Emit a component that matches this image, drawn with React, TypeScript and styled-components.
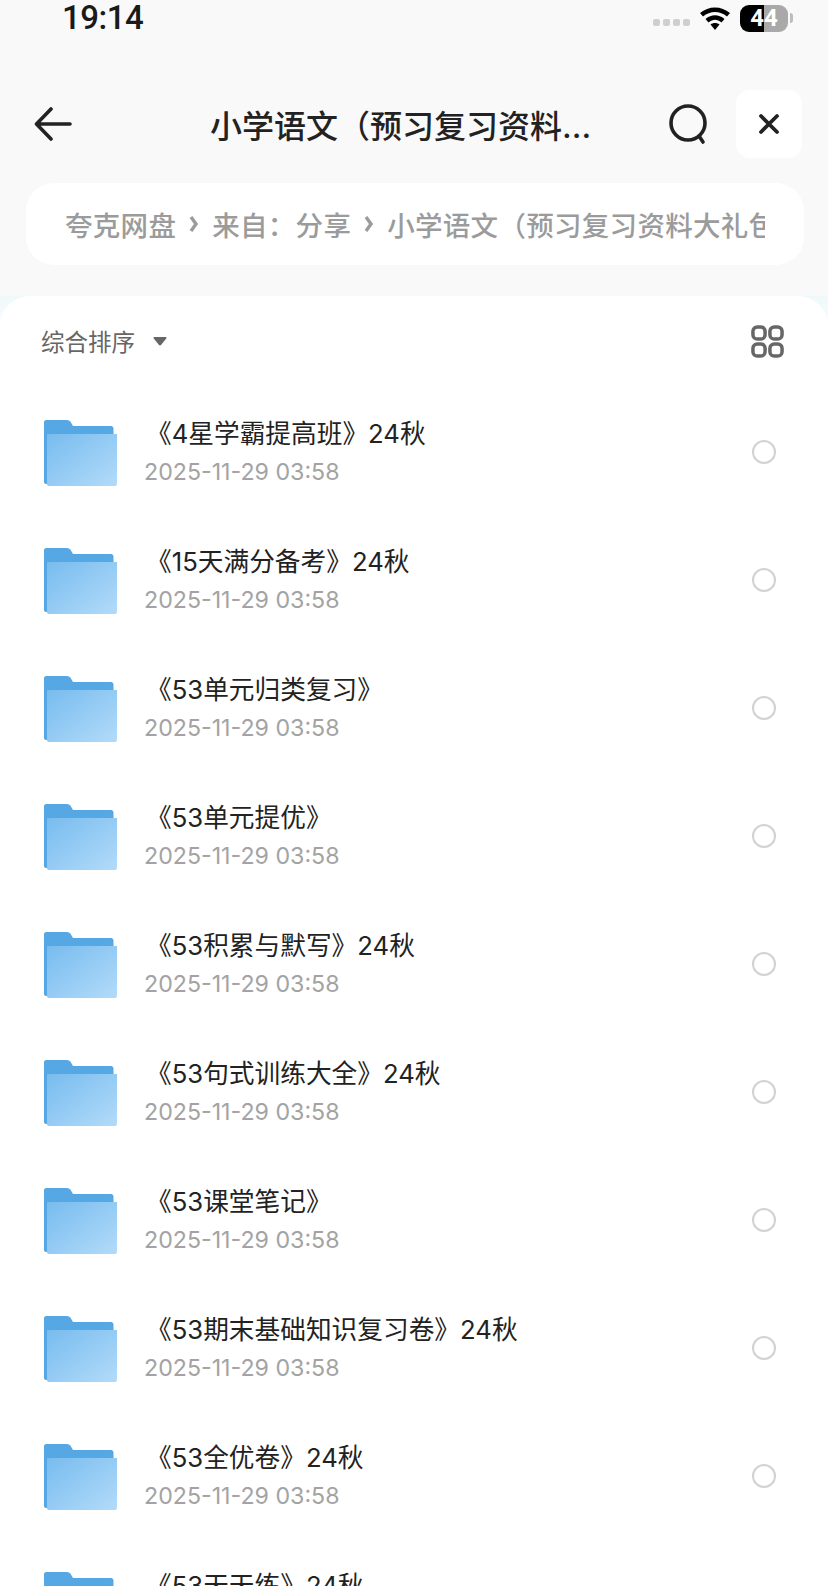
import React, { FC } from "react";
import styled, { createGlobalStyle } from "styled-components";

const GlobalStyle = createGlobalStyle`
  html, body {
    margin: 0;
    padding: 0;
    background: #f9f9f9;
  }
  body {
    width: 828px;
    height: 1586px;
    overflow: hidden;
    font-family: Inter, "Noto Sans CJK SC", sans-serif;
  }
`;

const Page = styled.div`
  width: 828px;
  height: 1586px;
  overflow: hidden;
  display: flex;
  flex-direction: column;
  background: #f9f9f9;
`;

const StatusBar = styled.div`
  height: 36px;
  flex: none;
  display: flex;
  align-items: center;
  padding: 0 35px 0 62px;
`;

const Clock = styled.div`
  font-family: Roboto, sans-serif;
  font-size: 33px;
  line-height: 34px;
  font-weight: 500;
  color: #1a1a1a;
  letter-spacing: -0.5px;
`;

const StatusRight = styled.div`
  margin-left: auto;
  display: flex;
  align-items: center;
`;

const SignalDots = styled.div`
  display: flex;
  gap: 3px;
  margin: 8px 9px 0 0;
`;

const SignalDot = styled.span`
  width: 7px;
  height: 7px;
  border-radius: 2px;
  background: #cfcfcf;
`;

const Battery = styled.div`
  width: 48px;
  height: 27px;
  margin-left: 9px;
  border-radius: 9px;
  background: linear-gradient(90deg, #000 0 50%, #a9a9a9 50% 100%);
  color: #fff;
  font-family: Roboto, sans-serif;
  font-size: 24px;
  font-weight: 700;
  line-height: 27px;
  text-align: center;
`;

const BatteryCap = styled.span`
  width: 3px;
  height: 10px;
  margin-left: 2px;
  border-radius: 0 3px 3px 0;
  background: #bdbdbd;
`;

const NavBar = styled.div`
  flex: none;
  display: flex;
  align-items: center;
  height: 68px;
  margin-top: 54px;
  padding: 0 24px 0 34px;
`;

const NavTitle = styled.div`
  width: 396px;
  margin-left: 138px;
  font-size: 32px;
  font-weight: 500;
  color: #222;
  white-space: nowrap;
`;

const SearchButton = styled.div`
  width: 42px;
  height: 42px;
  margin-left: 62px;
`;

const CloseButton = styled.div`
  width: 66px;
  height: 68px;
  margin-left: 26px;
  border-radius: 14px;
  background: #fff;
  display: flex;
  align-items: center;
  justify-content: center;
`;

const Breadcrumb = styled.div`
  flex: none;
  height: 82px;
  margin: 25px 24px 0 26px;
  padding: 0 39px;
  border-radius: 28px;
  background: #fff;
  display: flex;
  align-items: center;
`;

const CrumbTrack = styled.div`
  flex: 1;
  overflow: hidden;
  display: flex;
  align-items: center;
  white-space: nowrap;
  font-size: 27.5px;
  font-weight: 500;
  letter-spacing: 0.3px;
  color: #9b9b9b;
`;

const CrumbArrow = styled.svg`
  flex: none;
  width: 10px;
  height: 20px;
  margin: 0 13px;
`;

const PanelBack = styled.div`
  flex: 1;
  margin-top: 31px;
  background: linear-gradient(180deg, #eff8fa 0, #fdfefe 40px);
`;

const Panel = styled.div`
  height: 100%;
  border-radius: 30px 30px 0 0;
  background: #fff;
`;

const SortBar = styled.div`
  height: 92px;
  padding: 0 44px 2px 41px;
  display: flex;
  align-items: center;
  box-sizing: border-box;
`;

const SortLabel = styled.span`
  font-size: 23.5px;
  color: #666;
`;

const SortCaret = styled.svg`
  width: 14px;
  height: 10px;
  margin-left: 18px;
`;

const GridIcon = styled.svg`
  width: 33px;
  height: 33px;
  margin-left: auto;
`;

const FileList = styled.div`
  display: flex;
  flex-direction: column;
`;

const Row = styled.div`
  height: 128px;
  flex: none;
  display: flex;
  align-items: center;
  padding: 0 52px 0 44px;
  box-sizing: border-box;
`;

const FolderIcon = styled.svg`
  width: 73px;
  height: 66px;
  flex: none;
  margin-top: 1px;
`;

const RowText = styled.div`
  flex: 1;
  min-width: 0;
  margin-left: 27px;
  padding-top: 2px;
  display: flex;
  flex-direction: column;
`;

const RowTitle = styled.div`
  padding-left: 2px;
  font-size: 25.7px;
  line-height: 38px;
  color: #222;
  white-space: nowrap;
`;

const RowDate = styled.div`
  font-size: 23.2px;
  line-height: 38px;
  color: #a3a3a3;
  white-space: nowrap;
`;

const Radio = styled.span`
  width: 24px;
  height: 24px;
  flex: none;
  box-sizing: border-box;
  border: 2px solid #d2d2d2;
  border-radius: 50%;
`;

const FolderGlyph: FC<{ id: string }> = ({ id }) => (
  <FolderIcon viewBox="0 0 73 66">
    <defs>
      <linearGradient id={id} x1="0" y1="0" x2="1" y2="1">
        <stop offset="0" stopColor="#77bcef" />
        <stop offset="1" stopColor="#b3dbf9" />
      </linearGradient>
    </defs>
    <path
      d="M2 0h21c2 0 3 1 4 2.500L29 6h38c1.500 0 2.500 1 2.500 2.500V64H2c-1 0-2-1-2-2V2C0 1 1 0 2 0z"
      fill="#56a8e4"
    />
    <path
      d="M4 14h69v50c0 1-1 2-2 2H4.500C3.500 66 3 65 3 64V15c0-.6.400-1 1-1z"
      fill={`url(#${id})`}
    />
  </FolderIcon>
);

const Arrow: FC = () => (
  <CrumbArrow viewBox="0 0 10 20">
    <path d="M2 3l5 7-5 7" fill="none" stroke="#9b9b9b" strokeWidth="3.400" />
  </CrumbArrow>
);

const items = [
  "《4星学霸提高班》24秋",
  "《15天满分备考》24秋",
  "《53单元归类复习》",
  "《53单元提优》",
  "《53积累与默写》24秋",
  "《53句式训练大全》24秋",
  "《53课堂笔记》",
  "《53期末基础知识复习卷》24秋",
  "《53全优卷》24秋",
  "《53天天练》24秋",
];

const App: FC = () => (
  <Page>
    <GlobalStyle />
    <StatusBar>
      <Clock>19:14</Clock>
      <StatusRight>
        <SignalDots>
          <SignalDot />
          <SignalDot />
          <SignalDot />
          <SignalDot />
        </SignalDots>
        <svg width="32" height="26" viewBox="0 0 32 26">
          <path d="M1 8C9.500 .5 22.500 .5 31 8l-3 3.600C21 5.500 11 5.500 4 11.600z" fill="#000" />
          <path d="M6.500 14c6-5 13-5 19 0l-3 3.400c-4.500-3.500-8.500-3.500-13 0z" fill="#000" />
          <path d="M11.500 19.500c2.500-2 6.500-2 9 0L16 25z" fill="#000" />
        </svg>
        <Battery>44</Battery>
        <BatteryCap />
      </StatusRight>
    </StatusBar>

    <NavBar>
      <svg width="38" height="34" viewBox="0 0 38 34">
        <path
          d="M36 17H3M17 2L2.500 17 17 32"
          fill="none"
          stroke="#222"
          strokeWidth="3.600"
          strokeLinecap="round"
          strokeLinejoin="round"
        />
      </svg>
      <NavTitle>小学语文（预习复习资料...</NavTitle>
      <SearchButton>
        <svg width="42" height="42" viewBox="0 0 42 42">
          <circle cx="20" cy="20" r="17" fill="none" stroke="#222" strokeWidth="3.600" />
          <path d="M31 33l4 6" fill="none" stroke="#222" strokeWidth="3.600" strokeLinecap="round" />
        </svg>
      </SearchButton>
      <CloseButton>
        <svg width="22" height="22" viewBox="0 0 22 22">
          <path d="M3 3l16 16M19 3L3 19" fill="none" stroke="#222" strokeWidth="3.800" strokeLinecap="round" />
        </svg>
      </CloseButton>
    </NavBar>

    <Breadcrumb>
      <CrumbTrack>
        夸克网盘
        <Arrow />
        来自：分享
        <Arrow />
        小学语文（预习复习资料大礼包
      </CrumbTrack>
    </Breadcrumb>

    <PanelBack>
      <Panel>
        <SortBar>
          <SortLabel>综合排序</SortLabel>
          <SortCaret viewBox="0 0 14 10">
            <path d="M1.500 1h11c1 0 1.300 .8 .8 1.500L8 9c-.5.600-1.500.600-2 0L.7 2.500C.2 1.800.5 1 1.500 1z" fill="#666" />
          </SortCaret>
          <GridIcon viewBox="0 0 34 34">
            <g fill="none" stroke="#666" strokeWidth="3.600">
              <rect x="2" y="2" width="12.500" height="12.500" rx="4.500" />
              <rect x="19.500" y="2" width="12.500" height="12.500" rx="4.500" />
              <rect x="2" y="19.500" width="12.500" height="12.500" rx="4.500" />
              <rect x="19.500" y="19.500" width="12.500" height="12.500" rx="4.500" />
            </g>
          </GridIcon>
        </SortBar>
        <FileList>
          {items.map((title, i) => (
            <Row key={title}>
              <FolderGlyph id={`folder-${i}`} />
              <RowText>
                <RowTitle>{title}</RowTitle>
                <RowDate>2025-11-29 03:58</RowDate>
              </RowText>
              <Radio />
            </Row>
          ))}
        </FileList>
      </Panel>
    </PanelBack>
  </Page>
);

export default App;
